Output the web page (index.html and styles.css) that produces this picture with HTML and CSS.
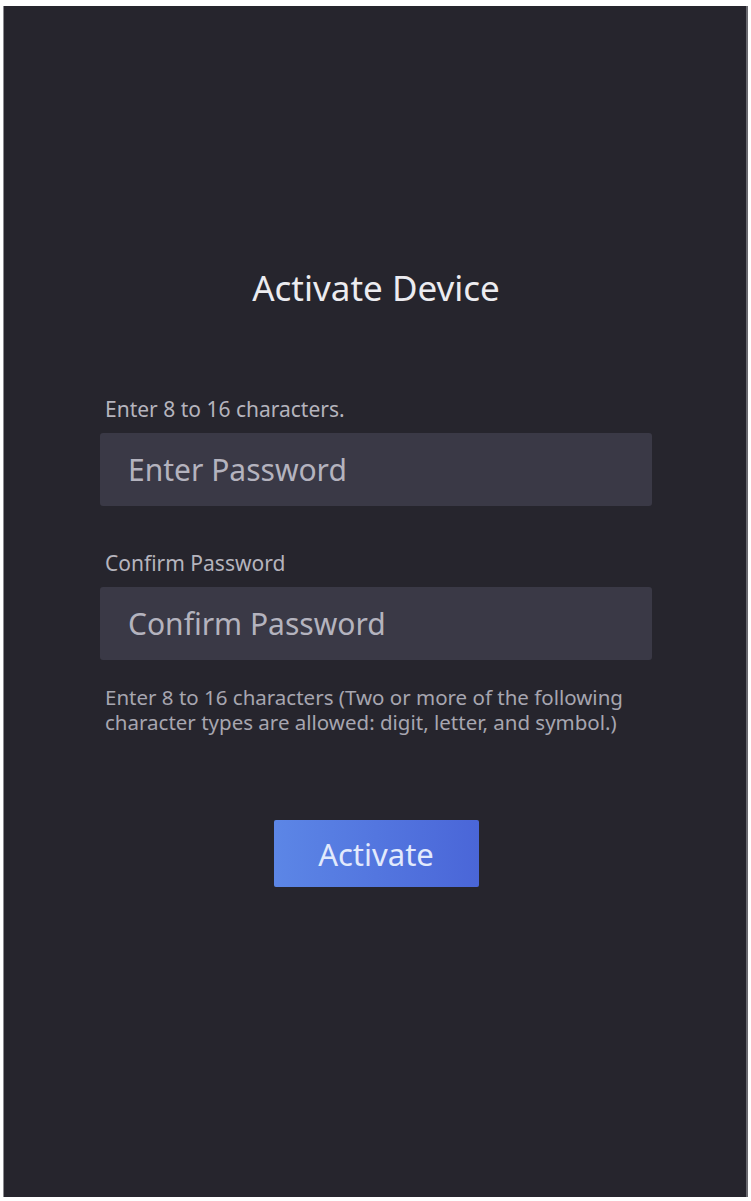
FILE: index.html
```html
<!DOCTYPE html>
<html lang="en">
<head>
  <meta charset="UTF-8" />
  <meta name="viewport" content="width=device-width, initial-scale=1.0" />
  <title>Activate Device</title>
  <link rel="stylesheet" href="styles.css">
</head>
<body>
  <div class="screen">
    <h1 class="title">Activate Device</h1>
    <form class="activate-form">
      <label class="field-label" for="password">Enter 8 to 16 characters.</label>
      <input class="field" id="password" type="password" placeholder="Enter Password" />
      <label class="field-label" for="confirm">Confirm Password</label>
      <input class="field" id="confirm" type="password" placeholder="Confirm Password" />
      <p class="hint">Enter 8 to 16 characters (Two or more of the following character types are allowed: digit, letter, and symbol.)</p>
      <button class="activate-btn" type="button">Activate</button>
    </form>
  </div>
</body>
</html>
```

FILE: styles.css
```css
body {
  margin: 0;
  background: #ffffff;
  font-family: "Noto Sans", "Open Sans", sans-serif;
}
.screen {
  margin: 6px 3px 4px 3px;
  padding-left: 2px;
  height: 1191px;
  background: #26252d;
  border-left: 1px solid #8a8a8f;
  border-right: 2px solid #6a6a70;
  box-sizing: border-box;
  display: flex;
  flex-direction: column;
  align-items: center;
}
.title {
  margin: 258px 0 0;
  font-size: 35px;
  font-weight: 400;
  color: #ececf0;
  line-height: 48px;
}
.activate-form {
  width: 552px;
  margin-top: 85px;
  display: flex;
  flex-direction: column;
}
.field-label {
  font-size: 21px;
  color: #b5b4bd;
  padding-left: 5px;
  line-height: 24px;
  margin-bottom: 12px;
}
.field {
  height: 73px;
  border: none;
  border-radius: 3px;
  background: #3a3946;
  padding: 0 28px;
  font-family: inherit;
  font-size: 30px;
  color: #ececf0;
  margin-bottom: 45px;
  outline: none;
}
.field::placeholder {
  color: #b4b3be;
}
.hint {
  margin: -20px 0 0;
  padding-left: 5px;
  font-size: 20.5px;
  line-height: 25px;
  color: #a7a6b0;
}
.activate-btn {
  align-self: center;
  margin-top: 85px;
  width: 205px;
  height: 67px;
  border: none;
  border-radius: 2px;
  background: linear-gradient(90deg, #5c86e6, #4a66d8);
  color: #e2eafc;
  font-family: inherit;
  font-size: 31px;
  cursor: pointer;
}
```
